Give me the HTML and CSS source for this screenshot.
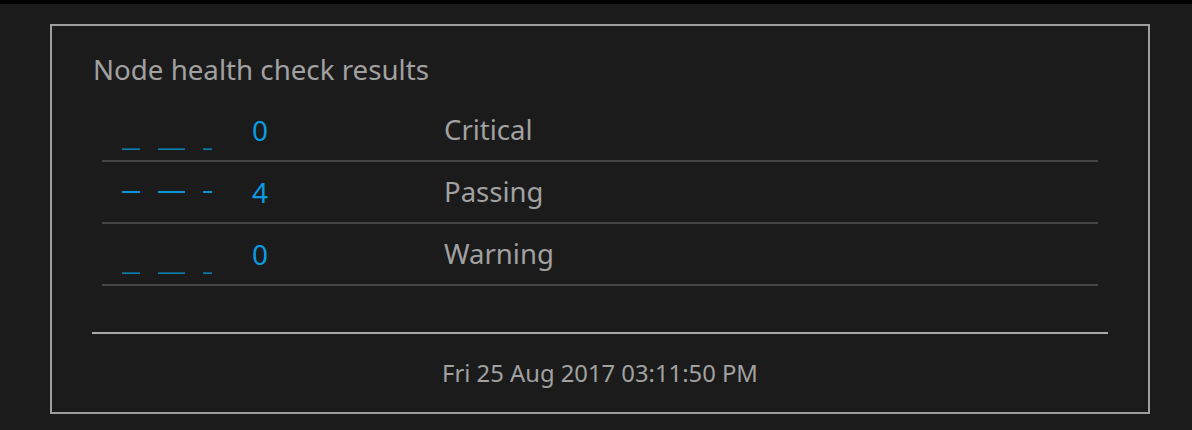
FILE: index.html
```html
<!DOCTYPE html>
<html lang="en">
<head>
<meta charset="utf-8">
<title>Node health check results</title>
<link rel="stylesheet" href="styles.css">
</head>
<body>
<div class="topbar"></div>
<section class="panel">
  <h2 class="title">Node health check results</h2>
  <div class="rows">
    <div class="row">
      <svg class="spark" width="150" height="60" viewBox="0 0 150 60">
        <rect x="20" y="48.5" width="18" height="1.3" fill="#0a96d8"/>
        <rect x="56" y="48.5" width="27" height="1.3" fill="#0a96d8"/>
        <rect x="101" y="48.5" width="9" height="1.3" fill="#0a96d8"/>
      </svg>
      <span class="count">0</span>
      <span class="label">Critical</span>
    </div>
    <div class="row">
      <svg class="spark" width="150" height="60" viewBox="0 0 150 60">
        <rect x="20" y="29" width="18" height="2" fill="#0a96d8"/>
        <rect x="56" y="29" width="27" height="2" fill="#0a96d8"/>
        <rect x="101" y="29" width="9" height="2" fill="#0a96d8"/>
      </svg>
      <span class="count">4</span>
      <span class="label">Passing</span>
    </div>
    <div class="row">
      <svg class="spark" width="150" height="60" viewBox="0 0 150 60">
        <rect x="20" y="48.5" width="18" height="1.3" fill="#0a96d8"/>
        <rect x="56" y="48.5" width="27" height="1.3" fill="#0a96d8"/>
        <rect x="101" y="48.5" width="9" height="1.3" fill="#0a96d8"/>
      </svg>
      <span class="count">0</span>
      <span class="label">Warning</span>
    </div>
  </div>
  <footer class="footer">Fri 25 Aug 2017 03:11:50 PM</footer>
</section>
</body>
</html>
```
FILE: styles.css
```css
html, body {
  margin: 0;
  padding: 0;
}
body {
  background: #1b1b1b;
  font-family: "Noto Sans", "Open Sans", sans-serif;
  color: #a1a1a1;
  height: 430px;
  overflow: hidden;
}
.topbar {
  height: 4px;
  background: #000;
}
.panel {
  box-sizing: border-box;
  width: 1100px;
  height: 390px;
  margin: 20px 0 0 50px;
  border: 2px solid #9e9e9e;
  padding: 0 40px;
}
.title {
  margin: 0 0 12px;
  padding: 24px 0 0 1px;
  font-size: 27.7px;
  font-weight: normal;
  line-height: 38px;
  height: 38px;
}
.rows {
  margin: 0 10px;
}
.row {
  display: flex;
  align-items: center;
  height: 60px;
  border-bottom: 2px solid #444;
}
.spark {
  display: block;
  flex: none;
}
.count {
  width: 192px;
  color: #0a9ae0;
  font-size: 28px;
  line-height: 38px;
}
.label {
  font-size: 27.5px;
  line-height: 38px;
}
.footer {
  margin-top: 46px;
  border-top: 2px solid #a8a8a8;
  text-align: center;
  font-size: 23.8px;
  line-height: 32px;
  padding-top: 23px;
}
```
